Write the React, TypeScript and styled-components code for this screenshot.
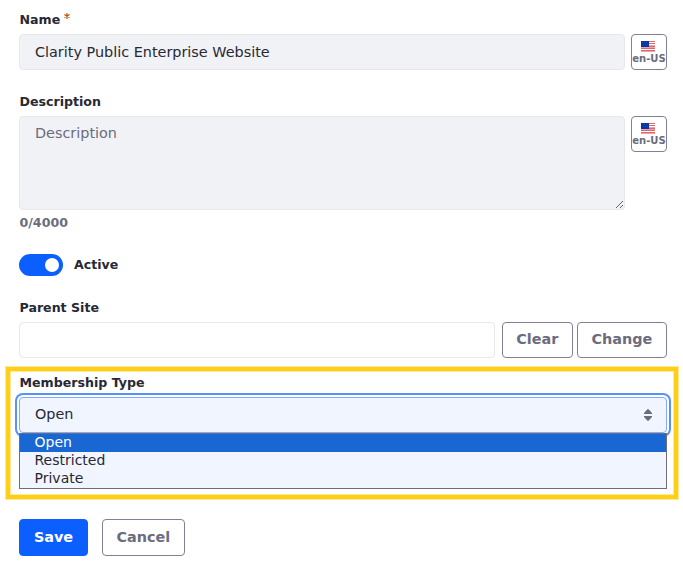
import React from "react";
import styled, { createGlobalStyle, css } from "styled-components";

const GlobalStyle = createGlobalStyle`
  *, *::before, *::after { box-sizing: border-box; }
  body {
    margin: 0;
    background: #fff;
    color: #272833;
    font-family: "DejaVu Sans", Verdana, sans-serif;
    font-size: 14.4px;
    overflow: hidden;
  }
`;

const Form = styled.form`
  display: flex;
  flex-direction: column;
  width: 683px;
  height: 566px;
  padding: 10px 16px 0 19px;
`;

const Field = styled.div<{ $gap: number }>`
  display: flex;
  flex-direction: column;
  margin-bottom: ${(p) => p.$gap}px;
`;

const Label = styled.label`
  display: flex;
  height: 20px;
  margin-bottom: 4px;
  padding-left: 0.5px;
  font-size: 12.6px;
  font-weight: 700;
  line-height: 20px;
  white-space: nowrap;
`;

const Required = styled.svg`
  width: 6px;
  height: 6px;
  margin: 3px 0 0 3.5px;
  stroke: #b95000;
  stroke-width: 1.15;
`;

const Row = styled.div<{ $gap: number }>`
  display: flex;
  align-items: flex-start;
  gap: ${(p) => p.$gap}px;
`;

const control = css`
  min-width: 0;
  margin: 0;
  padding: 0 15px;
  border: 1px solid #e7e7ed;
  border-radius: 4px;
  outline: 0;
  color: #272833;
  font: 14.4px "DejaVu Sans", Verdana, sans-serif;
`;

const Input = styled.input<{ $plain?: boolean }>`
  ${control}
  flex: 1;
  height: 36px;
  margin-right: ${(p) => (p.$plain ? 3 : 0)}px;
  background: ${(p) => (p.$plain ? "#fff" : "#f1f2f5")};
`;

const TextArea = styled.textarea`
  ${control}
  flex: 1;
  height: 94px;
  padding-top: 6px;
  line-height: 20px;
  background: #f1f2f5;
  resize: vertical;
  &::placeholder { color: #6b6c7e; opacity: 1; }
`;

const Button = styled.button<{ $primary?: boolean; $width: number; $height?: number }>`
  flex: none;
  width: ${(p) => p.$width}px;
  height: ${(p) => p.$height ?? 36}px;
  padding: 0 ${(p) => (p.$primary ? 0 : 0.4)}px ${(p) => (p.$height ? 1 : 2)}px 0;
  border: 1px solid ${(p) => (p.$primary ? "#0b5fff" : "#857f96")};
  border-radius: 4px;
  background: ${(p) => (p.$primary ? "#0b5fff" : "#fff")};
  color: ${(p) => (p.$primary ? "#fff" : "#6b6c7e")};
  font: 700 14.4px "DejaVu Sans", Verdana, sans-serif;
`;

const LocaleButton = styled(Button)`
  display: flex;
  flex-direction: column;
  align-items: center;
  padding: 6px 0 0;
  font-size: 10px;
  line-height: 14px;
  white-space: nowrap;
`;

const FlagIcon = styled.svg`
  display: block;
  flex: none;
  width: 14px;
  height: 11px;
  margin-right: 2px;
`;

const Counter = styled.div`
  height: 20px;
  margin-top: 3px;
  padding-left: 0.5px;
  color: #6b6c7e;
  font-size: 12.6px;
  font-weight: 700;
  line-height: 20px;
`;

const ToggleRow = styled.div`
  display: flex;
  align-items: center;
  gap: 11px;
  height: 22px;
  margin-bottom: 22px;
  font-size: 12.6px;
  font-weight: 700;
  line-height: 20px;
`;

const Toggle = styled.span`
  display: flex;
  align-items: center;
  justify-content: flex-end;
  width: 44px;
  height: 22px;
  padding: 0 4px;
  border-radius: 11px;
  background: #0b5fff;
  &::after {
    content: "";
    width: 14px;
    height: 14px;
    border-radius: 50%;
    background: #fff;
  }
`;

const Highlight = styled.section`
  height: 132px;
  margin: 0 -11px 20px -13px;
  padding: 2px 7px 0 9px;
  border: 4px solid #ffcf17;
  box-shadow: 0 0 0 1px #ffe99b, inset 0 0 0 1px #ffe99b;
`;

const Select = styled.div`
  display: flex;
  align-items: center;
  justify-content: space-between;
  height: 36px;
  padding: 0 14px 0 15px;
  border: 1px solid #80acff;
  border-radius: 4px;
  background: #f0f5ff;
  box-shadow: 0 0 0 2px #fff, 0 0 0 4px #5791ff;
`;

const Value = styled.span`
  padding-bottom: 2px;
`;

const Options = styled.ul`
  position: relative;
  height: 56px;
  margin: 0;
  padding: 0;
  border: 1px solid #6d6e7a;
  background: #f0f5ff;
  list-style: none;
`;

const Option = styled.li<{ $selected?: boolean }>`
  height: 18px;
  padding-left: 14.5px;
  background: ${(p) => (p.$selected ? "#1967d2" : "transparent")};
  color: ${(p) => (p.$selected ? "#fff" : "#272833")};
  font-size: 14px;
  line-height: 17px;
`;

function Flag() {
  return (
    <FlagIcon viewBox="0 0 14 11">
      <path fill="#fff" d="M0 0h14v11H0z" />
      <path fill="#e2656a" d="M8 0h6v1H8zM8 2h6v1H8zM8 5h6v1H8zM0 7h14v1H0zM0 9h14v1H0z" />
      <path fill="#f0a3a6" d="M8 4h6v1H8zM0 6h14v1H0zM0 10h14v1H0z" />
      <path fill="#0636a5" d="M0 0h8v6H0z" />
      <path fill="#3158b0" d="M1 1h1v1H1zM3 1h1v1H3zM5 1h1v1H5zM2 3h1v1H2zM4 3h1v1H4zM6 3h1v1H6z" opacity=".5" />
    </FlagIcon>
  );
}

function Locale() {
  return (
    <LocaleButton type="button" $width={36}>
      <Flag />
      en-US
    </LocaleButton>
  );
}

export default function App() {
  return (
    <>
      <GlobalStyle />
      <Form>
        <Field $gap={22}>
          <Label>
            Name
            <Required viewBox="0 0 6 6">
              <path d="M3 0v6M.4 1.5l5.2 3M5.6 1.5l-5.2 3" />
            </Required>
          </Label>
          <Row $gap={6}>
            <Input defaultValue="Clarity Public Enterprise Website" />
            <Locale />
          </Row>
        </Field>
        <Field $gap={21}>
          <Label>Description</Label>
          <Row $gap={6}>
            <TextArea placeholder="Description" />
            <Locale />
          </Row>
          <Counter>0/4000</Counter>
        </Field>
        <ToggleRow>
          <Toggle />
          Active
        </ToggleRow>
        <Field $gap={9}>
          <Label>Parent Site</Label>
          <Row $gap={4}>
            <Input $plain />
            <Button type="button" $width={71}>Clear</Button>
            <Button type="button" $width={90}>Change</Button>
          </Row>
        </Field>
        <Highlight>
          <Label>Membership Type</Label>
          <Select>
            <Value>Open</Value>
            <svg width="8" height="12" viewBox="0 0 8 12" fill="#6b6c7e">
              <path d="M0 5V4l3.2-3.6q.8-.8 1.6 0L8 4v1zM0 7v1l3.2 3.6q.8.8 1.6 0L8 8V7z" />
            </svg>
          </Select>
          <Options>
            <Option $selected>Open</Option>
            <Option>Restricted</Option>
            <Option>Private</Option>
          </Options>
        </Highlight>
        <Row $gap={14}>
          <Button type="button" $primary $width={69} $height={37}>Save</Button>
          <Button type="button" $width={83} $height={37}>Cancel</Button>
        </Row>
      </Form>
    </>
  );
}
